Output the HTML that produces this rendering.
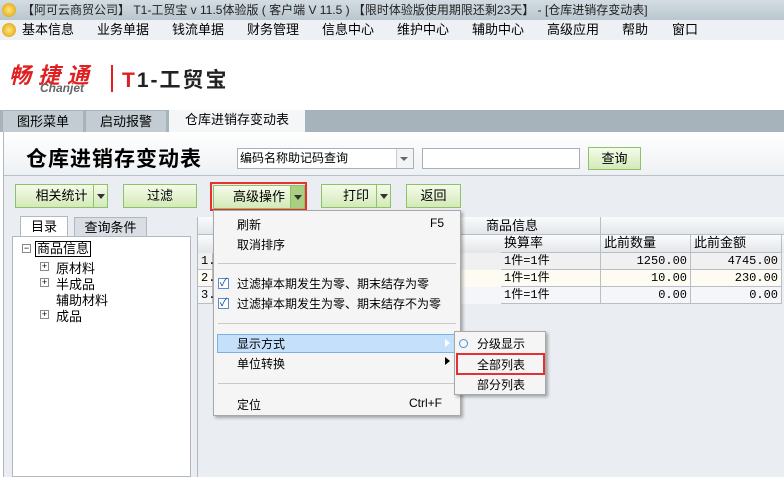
<!DOCTYPE html>
<html><head><meta charset="utf-8"><style>
*{box-sizing:border-box;margin:0;padding:0}
body{width:784px;height:477px;overflow:hidden;position:relative;font-family:"Liberation Sans","Noto Sans CJK SC",sans-serif;font-size:12px;color:#000;background:#fff}
.a{position:absolute}
.btn{position:absolute;height:24px;border:1px solid #8fc16a;background:linear-gradient(#f4fbe9,#d3eab8);text-align:center;line-height:22px;font-size:13px}
.dd{position:absolute;top:0;right:0;width:14px;height:22px;border-left:1px solid #8fc16a}
.dd:after{content:"";position:absolute;left:3px;top:9px;border:4px solid transparent;border-top:5px solid #333}
.mi{position:absolute;left:23px;font-size:12px}
.sep{position:absolute;left:4px;right:4px;height:1px;background:#c8c8c8}
.cell{position:absolute;height:17px;border-right:1px solid #b8bec4;border-bottom:1px solid #b8bec4;line-height:16px;font-size:12px;padding:0 3px;font-family:"Liberation Mono","Noto Sans CJK SC",monospace}
</style></head><body>
<div class="a" style="left:0;top:0;width:784px;height:20px;background:linear-gradient(#d4dde3,#b9c6cf);font-size:12px;line-height:20px;color:#222;padding-left:22px;white-space:nowrap">【阿可云商贸公司】 T1-工贸宝 v 11.5体验版 ( 客户端 V 11.5 ) 【限时体验版使用期限还剩23天】 - [仓库进销存变动表]</div>
<div class="a" style="left:2px;top:3px;width:14px;height:14px;border-radius:7px;background:radial-gradient(#ffe680,#d99a00)"></div>
<div class="a" style="left:0;top:20px;width:784px;height:20px;background:#edf0f4;font-size:13px;line-height:20px;white-space:nowrap;word-spacing:0">
<span style="position:absolute;left:22px">基本信息</span><span style="position:absolute;left:97px">业务单据</span><span style="position:absolute;left:172px">钱流单据</span><span style="position:absolute;left:247px">财务管理</span><span style="position:absolute;left:322px">信息中心</span><span style="position:absolute;left:397px">维护中心</span><span style="position:absolute;left:472px">辅助中心</span><span style="position:absolute;left:547px">高级应用</span><span style="position:absolute;left:622px">帮助</span><span style="position:absolute;left:672px">窗口</span>
</div>
<div class="a" style="left:2px;top:23px;width:14px;height:14px;border-radius:7px;background:radial-gradient(#ffe680,#d99a00)"></div>
<div class="a" style="left:9px;top:58px;font-size:22px;font-weight:bold;font-style:italic;color:#e02020;letter-spacing:7px">畅捷通</div>
<div class="a" style="left:40px;top:81px;font-size:12px;font-style:italic;color:#666;font-weight:bold">Chanjet</div>
<div class="a" style="left:111px;top:65px;width:2px;height:27px;background:#e02020"></div>
<div class="a" style="left:122px;top:64px;font-size:21px;font-weight:bold;color:#222;letter-spacing:2px"><span style="color:#e02020">T</span>1-工贸宝</div>
<div class="a" style="left:0;top:110px;width:784px;height:22px;background:#a7b3bb"></div>
<div class="a" style="left:3px;top:111px;width:80px;height:21px;background:#c3ccd2;text-align:center;line-height:21px;font-size:13px">图形菜单</div>
<div class="a" style="left:86px;top:111px;width:80px;height:21px;background:#c3ccd2;text-align:center;line-height:21px;font-size:13px">启动报警</div>
<div class="a" style="left:169px;top:110px;width:136px;height:22px;background:#f4f6f8;text-align:center;line-height:20px;font-size:13px">仓库进销存变动表</div>
<div class="a" style="left:3px;top:132px;width:781px;height:345px;background:#eaeef2;border-left:1px solid #b0b8c0"></div>
<div class="a" style="left:4px;top:132px;width:780px;height:44px;background:linear-gradient(#fff,#eef1f4);border-bottom:1px solid #b8c0c8"></div>
<div class="a" style="left:26px;top:143px;font-size:21px;font-weight:bold;letter-spacing:1px">仓库进销存变动表</div>
<div class="a" style="left:237px;top:148px;width:177px;height:21px;border:1px solid #a8b0b8;background:#fff;line-height:19px;padding-left:2px;font-size:12px">编码名称助记码查询<div style="position:absolute;right:0;top:0;width:17px;height:19px;border-left:1px solid #c8ccd0;background:#f2f4f6"></div><div style="position:absolute;right:5px;top:8px;border:4px solid transparent;border-top:4px solid #666"></div></div>
<div class="a" style="left:422px;top:148px;width:158px;height:21px;border:1px solid #a8b0b8;background:#fff"></div>
<div class="btn" style="left:588px;top:147px;width:53px;height:23px">查询</div>
<div class="btn" style="left:15px;top:184px;width:93px">相关统计　<div class="dd"></div></div>
<div class="btn" style="left:123px;top:184px;width:74px">过滤</div>
<div class="btn" style="left:213px;top:185px;width:92px">高级操作　<div class="dd" style="background:#a8d080"></div></div>
<div class="a" style="left:210px;top:182px;width:97px;height:29px;border:2px solid #e83030"></div>
<div class="btn" style="left:321px;top:184px;width:70px">打印　<div class="dd"></div></div>
<div class="btn" style="left:406px;top:184px;width:55px">返回</div>
<div class="a" style="left:20px;top:216px;width:48px;height:21px;background:#fff;border:1px solid #b0b8c0;border-bottom:none;text-align:center;line-height:20px;font-size:13px">目录</div>
<div class="a" style="left:74px;top:217px;width:73px;height:20px;background:#d8dee4;border:1px solid #b0b8c0;text-align:center;line-height:19px;font-size:13px">查询条件</div>
<div class="a" style="left:12px;top:236px;width:179px;height:241px;background:#fff;border:1px solid #b0b8c0"></div>
<div class="a" style="left:22px;top:244px;width:9px;height:9px;border:1px solid #888;font-size:9px;line-height:7px;text-align:center">−</div>
<div class="a" style="left:35px;top:241px;border:1px solid #000;padding:0 1px;font-size:13px;line-height:14px">商品信息</div>
<div class="a" style="left:40px;top:262px;width:9px;height:9px;border:1px solid #888;font-size:9px;line-height:7px;text-align:center">+</div>
<div class="a" style="left:56px;top:258px;font-size:13px">原材料</div>
<div class="a" style="left:40px;top:278px;width:9px;height:9px;border:1px solid #888;font-size:9px;line-height:7px;text-align:center">+</div>
<div class="a" style="left:56px;top:274px;font-size:13px">半成品</div>
<div class="a" style="left:56px;top:290px;font-size:13px">辅助材料</div>
<div class="a" style="left:40px;top:310px;width:9px;height:9px;border:1px solid #888;font-size:9px;line-height:7px;text-align:center">+</div>
<div class="a" style="left:56px;top:306px;font-size:13px">成品</div>
<div class="a" style="left:197px;top:217px;width:587px;height:260px;background:#eaeef2;border-left:1px solid #b0b8c0"></div>
<div class="a" style="left:198px;top:217px;width:403px;height:18px;background:linear-gradient(#fafbfc,#e2e6ea);border-right:1px solid #b8bec4;border-bottom:1px solid #b8bec4;text-align:right;padding-right:62px;line-height:17px;font-size:13px">商品信息</div>
<div class="a" style="left:601px;top:217px;width:183px;height:18px;background:linear-gradient(#fafbfc,#e2e6ea);border-bottom:1px solid #b8bec4"></div>
<div class="a" style="left:198px;top:235px;width:586px;height:18px;background:linear-gradient(#fafbfc,#e2e6ea)"></div>
<div class="cell" style="left:501px;top:235px;width:100px;height:18px;font-family:inherit;font-size:13px">换算率</div>
<div class="cell" style="left:601px;top:235px;width:90px;height:18px;font-family:inherit;font-size:13px">此前数量</div>
<div class="cell" style="left:691px;top:235px;width:91px;height:18px;font-family:inherit;font-size:13px">此前金额</div>
<div class="a" style="left:198px;top:253px;width:584px;height:17px;background:#f0f0f0"></div>
<div class="a" style="left:198px;top:270px;width:584px;height:17px;background:#fdfbf2"></div>
<div class="a" style="left:198px;top:287px;width:584px;height:17px;background:#f4f6fa"></div>
<div class="cell" style="left:198px;top:253px;width:15px">1.</div><div class="cell" style="left:198px;top:270px;width:15px">2.</div><div class="cell" style="left:198px;top:287px;width:15px">3.</div>
<div class="cell" style="left:501px;top:253px;width:100px">1件=1件</div><div class="cell" style="left:601px;top:253px;width:90px;text-align:right">1250.00</div><div class="cell" style="left:691px;top:253px;width:91px;text-align:right">4745.00</div>
<div class="cell" style="left:501px;top:270px;width:100px">1件=1件</div><div class="cell" style="left:601px;top:270px;width:90px;text-align:right">10.00</div><div class="cell" style="left:691px;top:270px;width:91px;text-align:right">230.00</div>
<div class="cell" style="left:501px;top:287px;width:100px">1件=1件</div><div class="cell" style="left:601px;top:287px;width:90px;text-align:right">0.00</div><div class="cell" style="left:691px;top:287px;width:91px;text-align:right">0.00</div>
<div class="a" style="left:213px;top:210px;width:248px;height:206px;background:#f5f5f5;border:1px solid #a8a8a8;box-shadow:2px 2px 3px rgba(0,0,0,.3)">
<div class="mi" style="top:5px">刷新</div><div class="a" style="left:216px;top:5px">F5</div>
<div class="mi" style="top:25px">取消排序</div>
<div class="sep" style="top:52px"></div>
<div class="a" style="left:4px;top:67px;width:11px;height:11px;border:1px solid #5a8ad0;background:#fff;color:#1a4a9a;font-size:11px;line-height:9px;text-align:center">✓</div>
<div class="mi" style="top:64px">过滤掉本期发生为零、期末结存为零</div>
<div class="a" style="left:4px;top:87px;width:11px;height:11px;border:1px solid #5a8ad0;background:#fff;color:#1a4a9a;font-size:11px;line-height:9px;text-align:center">✓</div>
<div class="mi" style="top:84px">过滤掉本期发生为零、期末结存不为零</div>
<div class="sep" style="top:112px"></div>
<div class="a" style="left:3px;top:123px;width:242px;height:19px;background:#c5e0fa;border:1px solid #7ab0e6"></div>
<div class="mi" style="top:124px">显示方式</div><div class="a" style="left:231px;top:128px;border:4px solid transparent;border-left:5px solid #fff"></div>
<div class="mi" style="top:144px">单位转换</div><div class="a" style="left:231px;top:146px;border:4px solid transparent;border-left:5px solid #000"></div>
<div class="sep" style="top:172px"></div>
<div class="mi" style="top:185px">定位</div><div class="a" style="left:195px;top:185px">Ctrl+F</div>
</div>
<div class="a" style="left:454px;top:331px;width:92px;height:64px;background:#f5f5f5;border:1px solid #a8a8a8;box-shadow:2px 2px 3px rgba(0,0,0,.3)">
<div class="a" style="left:4px;top:7px;width:9px;height:9px;border:1px solid #4a90e0;border-radius:5px"></div>
<div class="a" style="left:22px;top:3px">分级显示</div>
<div class="a" style="left:22px;top:24px">全部列表</div>
<div class="a" style="left:22px;top:44px">部分列表</div>
</div>
<div class="a" style="left:456px;top:353px;width:89px;height:22px;border:2px solid #e83030"></div>
</body></html>
